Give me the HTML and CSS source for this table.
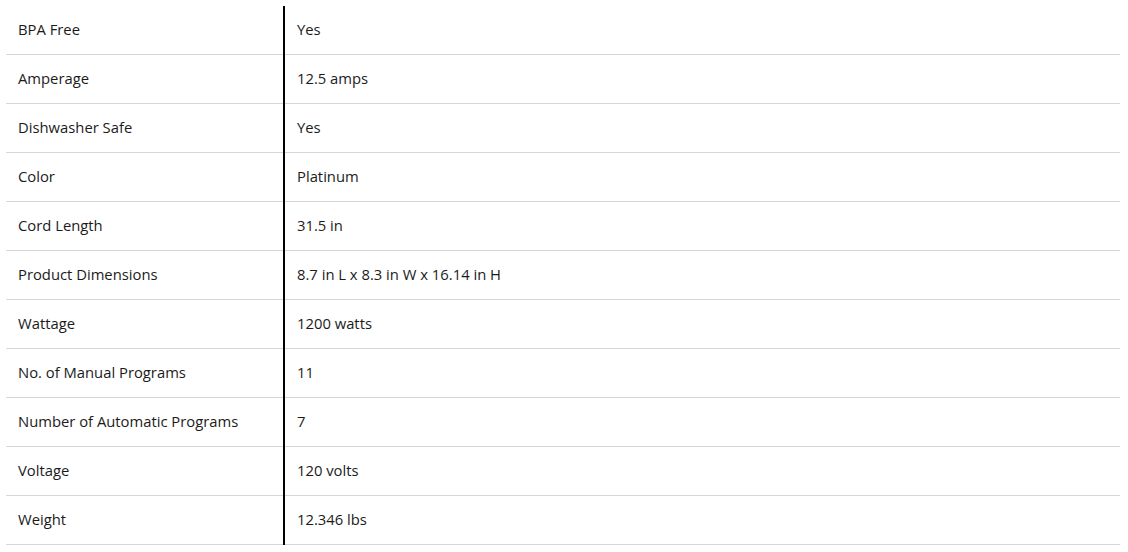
FILE: index.html
```html
<!DOCTYPE html>
<html>
<head>
<meta charset="utf-8">
<link rel="stylesheet" href="styles.css">
</head>
<body>
<div class="specs">
  <div class="row"><div class="k">BPA Free</div><div class="v">Yes</div></div>
  <div class="row"><div class="k">Amperage</div><div class="v">12.5 amps</div></div>
  <div class="row"><div class="k">Dishwasher Safe</div><div class="v">Yes</div></div>
  <div class="row"><div class="k">Color</div><div class="v">Platinum</div></div>
  <div class="row"><div class="k">Cord Length</div><div class="v">31.5 in</div></div>
  <div class="row"><div class="k">Product Dimensions</div><div class="v">8.7 in L x 8.3 in W x 16.14 in H</div></div>
  <div class="row"><div class="k">Wattage</div><div class="v">1200 watts</div></div>
  <div class="row"><div class="k">No. of Manual Programs</div><div class="v">11</div></div>
  <div class="row"><div class="k">Number of Automatic Programs</div><div class="v">7</div></div>
  <div class="row"><div class="k">Voltage</div><div class="v">120 volts</div></div>
  <div class="row"><div class="k">Weight</div><div class="v">12.346 lbs</div></div>
</div>
</body>
</html>
```

FILE: styles.css
```css
html, body {
  margin: 0;
  padding: 0;
  background: #ffffff;
}
body {
  padding: 6px 8px 0 6px;
  font-family: "Open Sans", "Liberation Sans", Arial, sans-serif;
  font-size: 14.8px;
  color: #1b1b1b;
}
.specs {
  display: flex;
  flex-direction: column;
}
.row {
  display: flex;
}
.k, .v {
  height: 49px;
  display: flex;
  align-items: center;
  padding: 0 12px 3px;
  box-sizing: border-box;
  box-shadow: inset 0 -1px 0 #d3d6da;
}
.k {
  width: 277px;
  flex: none;
}
.v {
  flex: 1;
  border-left: 2px solid #000000;
}
```
